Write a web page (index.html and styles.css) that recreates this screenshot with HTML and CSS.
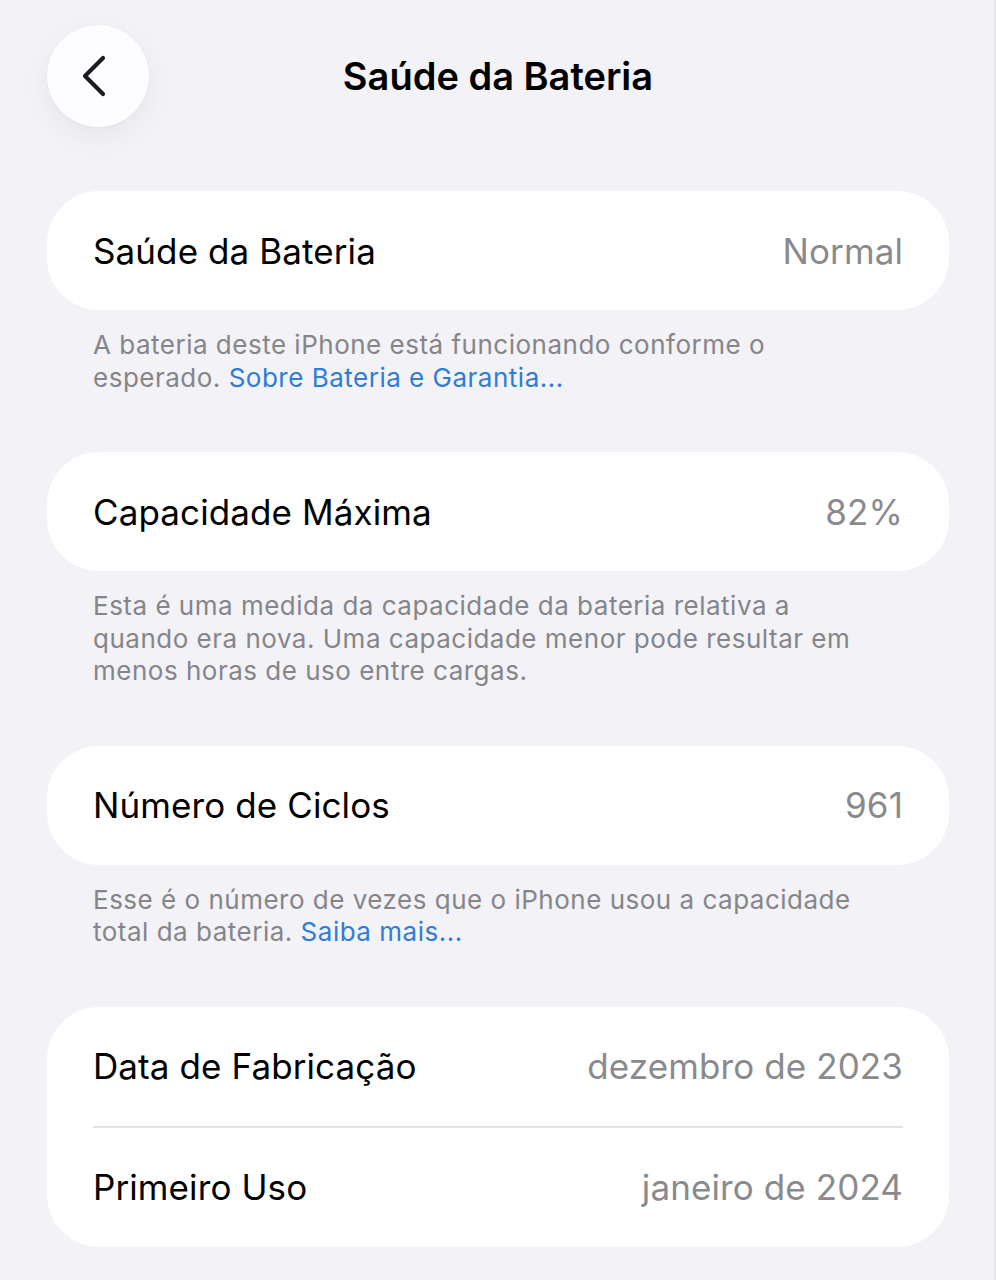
FILE: index.html
```html
<!DOCTYPE html>
<html lang="pt-BR">
<head>
<meta charset="utf-8">
<title>Saúde da Bateria</title>
<link rel="stylesheet" href="styles.css">
</head>
<body>
<div class="page">
  <header class="nav">
    <button class="back" aria-label="Voltar">
      <svg width="40" height="48" viewBox="0 0 40 48"><path d="M29 6 L11 24 L29 42" fill="none" stroke="#1c1c1e" stroke-width="4.2" stroke-linecap="round" stroke-linejoin="round"/></svg>
    </button>
    <h1 class="title">Saúde da Bateria</h1>
    <div class="spacer"></div>
  </header>

  <section class="group first">
    <div class="card">
      <div class="row"><span class="label">Saúde da Bateria</span><span class="value">Normal</span></div>
    </div>
    <p class="footer">A bateria deste iPhone está funcionando conforme o esperado. <a class="link" href="#">Sobre Bateria e Garantia...</a></p>
  </section>

  <section class="group">
    <div class="card">
      <div class="row"><span class="label">Capacidade Máxima</span><span class="value">82%</span></div>
    </div>
    <p class="footer">Esta é uma medida da capacidade da bateria relativa a quando era nova. Uma capacidade menor pode resultar em menos horas de uso entre cargas.</p>
  </section>

  <section class="group">
    <div class="card">
      <div class="row"><span class="label">Número de Ciclos</span><span class="value">961</span></div>
    </div>
    <p class="footer">Esse é o número de vezes que o iPhone usou a capacidade total da bateria. <a class="link" href="#">Saiba mais...</a></p>
  </section>

  <section class="group">
    <div class="card">
      <div class="row"><span class="label">Data de Fabricação</span><span class="value">dezembro de 2023</span></div>
      <div class="divider"></div>
      <div class="row"><span class="label">Primeiro Uso</span><span class="value">janeiro de 2024</span></div>
    </div>
  </section>
</div>
</body>
</html>
```

FILE: styles.css
```css
* { box-sizing: border-box; }
html, body {
  margin: 0;
  padding: 0;
  background: #f2f2f7;
}
body {
  font-family: "Inter", "Liberation Sans", sans-serif;
  color: #000;
  min-height: 1280px;
  box-shadow: inset -2px 0 0 #e6e6eb;
}
.page {
  padding: 25px 47px 0 47px;
}
.nav {
  display: grid;
  grid-template-columns: 102px 1fr 102px;
  align-items: center;
  height: 102px;
}
.back {
  width: 102px;
  height: 102px;
  border-radius: 50%;
  border: none;
  background: #fdfdff;
  box-shadow: 0 10px 30px rgba(0, 0, 0, 0.05), 0 1px 4px rgba(0, 0, 0, 0.03);
  display: flex;
  align-items: center;
  justify-content: center;
  padding: 0 8px 0 0;
}
.title {
  margin: 0;
  text-align: center;
  font-size: 38px;
  font-weight: 600;
  letter-spacing: 0;
  color: #000;
}
.group.first { margin-top: 64px; }
.group { margin-top: 58px; }
.card {
  background: #fff;
  border-radius: 52px;
  padding: 0 46px;
}
.row {
  height: 119px;
  display: flex;
  align-items: center;
  justify-content: space-between;
}
.label {
  font-size: 35px;
  letter-spacing: 0.1px;
  color: #000;
}
.value {
  font-size: 35px;
  letter-spacing: 0.1px;
  color: #8a8a8e;
}
.divider {
  height: 2px;
  background: #e3e3e7;
}
.footer {
  margin: 19px 0 0 0;
  padding: 0 66px 0 46px;
  font-size: 26px;
  line-height: 32.5px;
  letter-spacing: 0.5px;
  color: #85858a;
}
.link {
  color: #2f7dd6;
  text-decoration: none;
}
```
